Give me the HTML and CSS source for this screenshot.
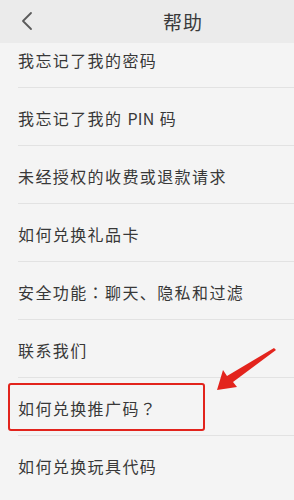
FILE: index.html
```html
<!DOCTYPE html>
<html lang="zh-CN">
<head>
<meta charset="utf-8">
<link rel="stylesheet" href="styles.css">
</head>
<body>
<div class="screen">
  <header class="topbar">
    <svg class="back" width="14" height="20" viewBox="0 0 14 20"><path d="M11 2 L3 10 L11 18" fill="none" stroke="#5a5a5a" stroke-width="1.8" stroke-linecap="round" stroke-linejoin="round"/></svg>
    <h1 class="title">帮助</h1>
  </header>
  <div class="viewport">
    <ul class="list">
      <li class="row">我忘记了我的密码</li>
      <li class="row">我忘记了我的 <span class="latin">PIN</span> 码</li>
      <li class="row">未经授权的收费或退款请求</li>
      <li class="row">如何兑换礼品卡</li>
      <li class="row">安全功能<span class="punct">：</span>聊天、隐私和过滤</li>
      <li class="row">联系我们</li>
      <li class="row">如何兑换推广码<span class="punct">？</span></li>
      <li class="row">如何兑换玩具代码</li>
    </ul>
  </div>
  <div class="highlight"></div>
  <svg class="arrow" width="70" height="50" viewBox="0 0 70 50">
    <path d="M0 43 L6 23 L10 29 L57 1 L59 3 L16 35 L20 40 Z" fill="#e3241d"/>
  </svg>
</div>
</body>
</html>
```
FILE: styles.css
```css
* { box-sizing: border-box; }
html, body { margin: 0; padding: 0; }
body {
  background: #f4f4f4;
  font-family: "Noto Sans CJK SC", "Noto Sans", sans-serif;
  color: #383838;
}
.screen {
  position: relative;
  width: 294px;
  height: 500px;
  overflow: hidden;
  background: #f4f4f4;
}
.topbar {
  height: 43px;
  background: #ebebeb;
  display: flex;
  align-items: center;
  position: relative;
  z-index: 1;
}
.back {
  margin-left: 20px;
  margin-top: -1px;
}
.title {
  margin: 0 0 0 129px;
  font-size: 19px;
  font-weight: 400;
  letter-spacing: 1px;
  color: #3a3a3a;
  line-height: 1;
}
.viewport {
  height: 457px;
  overflow: hidden;
}
.list {
  list-style: none;
  margin: -13px 0 0 0;
  padding: 0 0 0 18px;
}
.row {
  height: 58px;
  display: flex;
  align-items: center;
  font-size: 16px;
  letter-spacing: 1.4px;
  border-bottom: 1px solid #e2e2e2;
  padding-top: 2px;
  white-space: pre;
}
.row:last-child { border-bottom: none; }
.latin {
  letter-spacing: 0.3px;
}
.punct {
  font-family: "Noto Sans CJK TC", "Noto Sans CJK SC", sans-serif;
}
.highlight {
  position: absolute;
  left: 8px;
  top: 383px;
  width: 197px;
  height: 48px;
  border: 2.5px solid #e2231c;
  border-radius: 3px;
}
.arrow {
  position: absolute;
  left: 217px;
  top: 347px;
}
```
